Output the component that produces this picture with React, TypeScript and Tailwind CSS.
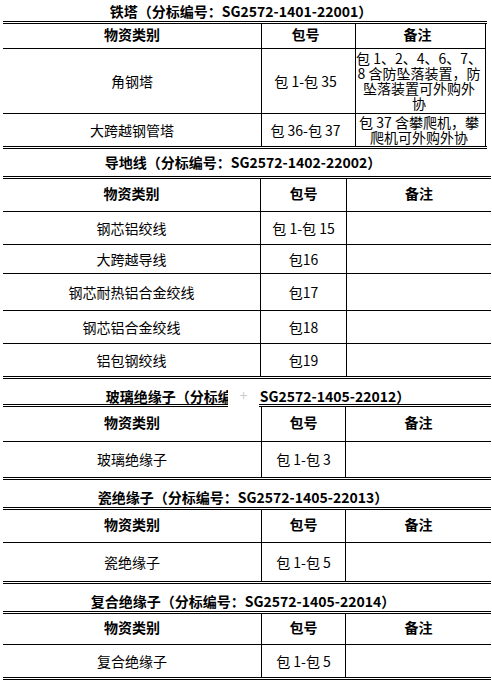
import React from "react";

type Row = { name: string; pkg: string; note?: React.ReactNode; h: string };

type SectionProps = {
  title: React.ReactNode;
  titleClass: string;
  width: string;
  cols: string;
  headerH: string;
  rows: Row[];
  boxed?: boolean;
  children?: React.ReactNode;
};

const Section: React.FC<SectionProps> = ({ title, titleClass, width, cols, headerH, rows, boxed, children }) => {
  const cell = "flex items-center justify-center text-center";
  const side = boxed ? "pr-[6px]" : "";
  return (
    <div className={`relative ml-[3px] ${width}`}>
      <div className={`flex items-end justify-center pr-[8px] font-bold leading-[16px] whitespace-nowrap ${titleClass}`}>
        {title}
      </div>
      <div className="border-y-[3px] border-double border-black">
        <div className={`grid ${cols} ${headerH} border-b border-black font-bold ${boxed ? "mr-[1px]" : ""}`}>
          <div className={`${cell} pb-[4px]`}>物资类别</div>
          <div className={`${cell} ${side} pb-[4px] border-l border-black`}>包号</div>
          <div className={`${cell} ${side} pb-[4px] border-l border-black ${boxed ? "border-r" : ""}`}>备注</div>
        </div>
        {rows.map((r, i) => (
          <div
            key={i}
            className={`grid ${cols} ${r.h} ${i < rows.length - 1 ? "border-b border-black" : ""} ${boxed ? "mr-[1px]" : ""}`}
          >
            <div className={cell}>{r.name}</div>
            <div className={`${cell} ${side} border-l border-black whitespace-nowrap`}>{r.pkg}</div>
            <div className={`${cell} pr-[3px] border-l border-black leading-[15px] whitespace-nowrap ${boxed ? "border-r" : ""}`}>
              {r.note}
            </div>
          </div>
        ))}
      </div>
      {children}
    </div>
  );
};

export default function App() {
  return (
    <div className="w-[492px] h-[684px] bg-white text-black text-[14px] font-['Noto_Sans_CJK_SC',sans-serif]">
      <Section
        title="铁塔（分标编号：SG2572-1401-22001）"
        titleClass="h-[21px] pb-[2px]"
        width="w-[484px]"
        cols="grid-cols-[258px_94px_1fr]"
        headerH="h-[25px]"
        boxed
        rows={[
          {
            name: "角钢塔",
            pkg: "包 1-包 35",
            h: "h-[65px]",
            note: (
              <span>
                包 1、2、4、6、7、
                <br />
                8 含防坠落装置，防
                <br />
                坠落装置可外购外
                <br />协
              </span>
            ),
          },
          {
            name: "大跨越钢管塔",
            pkg: "包 36-包 37",
            h: "h-[32px]",
            note: (
              <span>
                包 37 含攀爬机，攀
                <br />
                爬机可外购外协
              </span>
            ),
          },
        ]}
      />
      <Section
        title="导地线（分标编号：SG2572-1402-22002）"
        titleClass="h-[27px] pb-[6px]"
        width="w-[488px]"
        cols="grid-cols-[257px_86px_1fr]"
        headerH="h-[33px]"
        rows={[
          { name: "钢芯铝绞线", pkg: "包 1-包 15", h: "h-[33px]" },
          { name: "大跨越导线", pkg: "包16", h: "h-[29px]" },
          { name: "钢芯耐热铝合金绞线", pkg: "包17", h: "h-[37px]" },
          { name: "钢芯铝合金绞线", pkg: "包18", h: "h-[33px]" },
          { name: "铝包钢绞线", pkg: "包19", h: "h-[32px]" },
        ]}
      />
      <Section
        title="玻璃绝缘子（分标编号：SG2572-1405-22012）"
        titleClass="h-[25px] pl-[30px]"
        width="w-[488px]"
        cols="grid-cols-[258px_84px_1fr]"
        headerH="h-[35px]"
        rows={[{ name: "玻璃绝缘子", pkg: "包 1-包 3", h: "h-[35px]" }]}
      >
        <div className="absolute left-[225px] top-[1px] w-[31px] h-[27px] pt-[4px] bg-white flex items-center justify-center text-[15px] font-light text-[#c4c4c4]">
          +
        </div>
      </Section>
      <Section
        title="瓷绝缘子（分标编号：SG2572-1405-22013）"
        titleClass="h-[27px] pb-[2px]"
        width="w-[488px]"
        cols="grid-cols-[258px_84px_1fr]"
        headerH="h-[33px]"
        rows={[{ name: "瓷绝缘子", pkg: "包 1-包 5", h: "h-[38px]" }]}
      />
      <Section
        title="复合绝缘子（分标编号：SG2572-1405-22014）"
        titleClass="h-[27px] pb-[2px]"
        width="w-[488px]"
        cols="grid-cols-[258px_84px_1fr]"
        headerH="h-[31px]"
        rows={[{ name: "复合绝缘子", pkg: "包 1-包 5", h: "h-[32px]" }]}
      />
    </div>
  );
}
